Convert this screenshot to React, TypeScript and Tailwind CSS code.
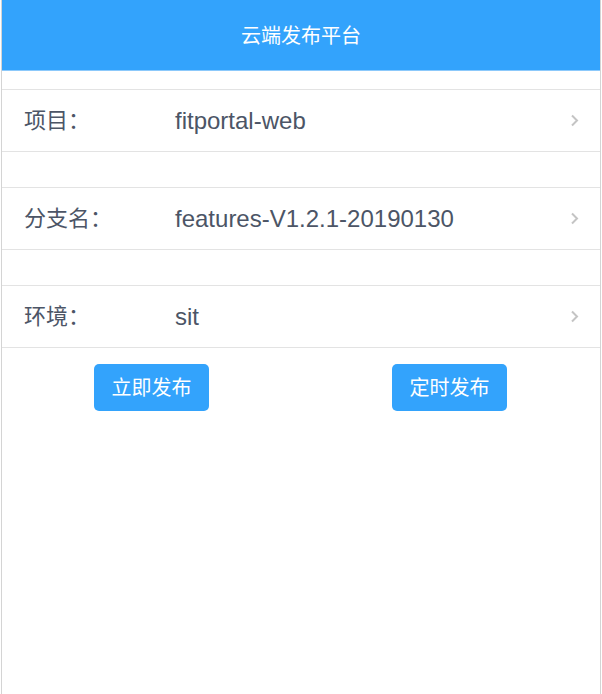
const rows = [
  { label: "项目：", value: "fitportal-web" },
  { label: "分支名：", value: "features-V1.2.1-20190130" },
  { label: "环境：", value: "sit" },
];

function Chevron() {
  return (
    <svg width="9" height="13" viewBox="0 0 9 13" className="text-[#c4c4c4]">
      <path d="M2 1.5 7 6.5 2 11.5" fill="none" stroke="currentColor" strokeWidth="2" />
    </svg>
  );
}

export default function App() {
  return (
    <div className="ml-px h-[694px] w-[600px] border-x border-[#d4d4d4] bg-white font-['Liberation_Sans','Noto_Sans_CJK_SC',sans-serif]">
      <header className="flex h-[71px] items-center justify-center border-b border-[#8cc9fb] bg-[#33a3fc] pt-0.5 text-[20px] text-white">
        云端发布平台
      </header>
      <div className="flex flex-col gap-[35px] pt-[18px]">
        {rows.map((r) => (
          <div
            key={r.label}
            className="flex h-[63px] items-center border-y border-[#e3e3e3] pl-[22px] pr-[21px] text-[#4c5566]"
          >
            <span className="w-[151px] text-[22px]">{r.label}</span>
            <span className="flex-1 text-[24px]">{r.value}</span>
            <Chevron />
          </div>
        ))}
      </div>
      <div className="grid grid-cols-2 pt-[16px]">
        <div className="flex justify-center">
          <button className="h-[47px] w-[115px] rounded-[5px] bg-[#33a3fc] text-[20px] text-white">立即发布</button>
        </div>
        <div className="flex justify-center">
          <button className="-ml-0.5 h-[47px] w-[115px] rounded-[5px] bg-[#33a3fc] text-[20px] text-white">定时发布</button>
        </div>
      </div>
    </div>
  );
}
